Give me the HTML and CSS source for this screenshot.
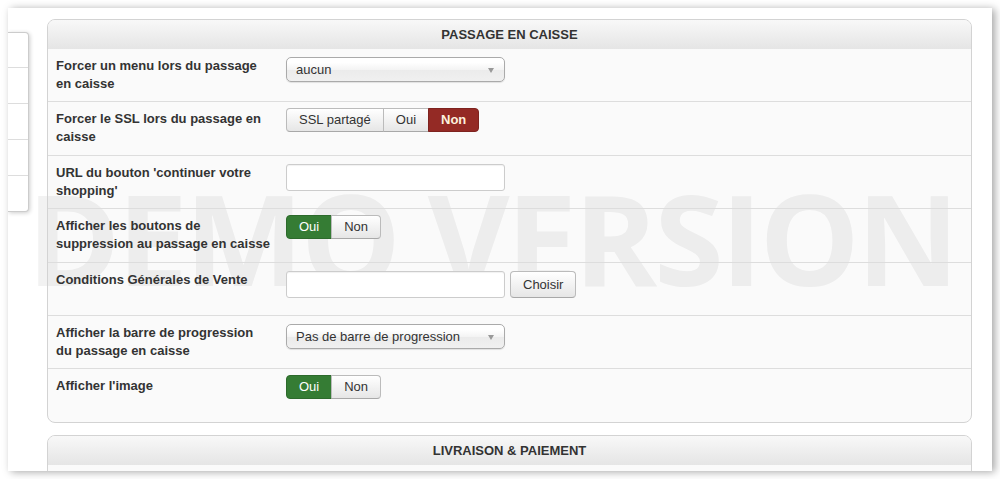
FILE: index.html
```html
<!DOCTYPE html>
<html lang="fr">
<head>
    <meta charset="UTF-8">
    <title>Passage en caisse</title>
    <link rel="stylesheet" href="styles.css">
</head>
<body>

<div class="page">
    <div class="watermark">DEMO VERSION</div>

    <ul class="side-nav">
        <li></li>
        <li></li>
        <li></li>
        <li></li>
        <li></li>
    </ul>

    <div class="main">
        <div class="panel">
            <div class="panel-head">PASSAGE EN CAISSE</div>

            <div class="row">
                <div class="label">Forcer un menu lors du passage en caisse</div>
                <div class="controls">
                    <div class="select">aucun</div>
                </div>
            </div>

            <div class="row">
                <div class="label">Forcer le SSL lors du passage en caisse</div>
                <div class="controls">
                    <div class="btn-group">
                        <span class="btn">SSL partagé</span>
                        <span class="btn">Oui</span>
                        <span class="btn btn-no">Non</span>
                    </div>
                </div>
            </div>

            <div class="row">
                <div class="label">URL du bouton 'continuer votre shopping'</div>
                <div class="controls">
                    <div class="input"></div>
                </div>
            </div>

            <div class="row">
                <div class="label">Afficher les boutons de suppression au passage en caisse</div>
                <div class="controls">
                    <div class="btn-group">
                        <span class="btn btn-yes">Oui</span>
                        <span class="btn">Non</span>
                    </div>
                </div>
            </div>

            <div class="row">
                <div class="label">Conditions Générales de Vente</div>
                <div class="controls">
                    <div class="input"></div>
                    <span class="btn-choose">Choisir</span>
                </div>
            </div>

            <div class="row">
                <div class="label">Afficher la barre de progression du passage en caisse</div>
                <div class="controls">
                    <div class="select">Pas de barre de progression</div>
                </div>
            </div>

            <div class="row">
                <div class="label">Afficher l'image</div>
                <div class="controls">
                    <div class="btn-group">
                        <span class="btn btn-yes">Oui</span>
                        <span class="btn">Non</span>
                    </div>
                </div>
            </div>
        </div>

        <div class="panel">
            <div class="panel-head">LIVRAISON &amp; PAIEMENT</div>

            <div class="row">
                <div class="label"></div>
                <div class="controls">
                    <div class="btn-group">
                        <span class="btn btn-yes">Oui</span>
                        <span class="btn">Non</span>
                    </div>
                </div>
            </div>
        </div>
    </div>
</div>

</body>
</html>
```

FILE: styles.css
```css
body {
    margin: 0;
    background-color: #fff;
    font-family: "Liberation Sans", Arial, sans-serif;
    font-size: 13px;
    color: #333;
}
.page {
    position: relative;
    display: flex;
    align-items: flex-start;
    margin: 8px;
    width: 984px;
    height: 463px;
    overflow: hidden;
    background-color: #fff;
    box-shadow: 3px 1px 8px rgba(0, 0, 0, 0.35);
}
/* big grey text behind the form */
.watermark {
    position: absolute;
    left: 19px;
    top: 166px;
    z-index: 0;
    font-family: "Open Sans", sans-serif;
    font-weight: bold;
    font-size: 126px;
    letter-spacing: -3px;
    line-height: 1;
    color: #f2f2f2;
    white-space: nowrap;
}
.side-nav {
    list-style: none;
    margin: 24px 0 0;
    padding: 0;
    width: 20px;
    border: 1px solid #ccc;
    border-left: none;
    border-radius: 0 4px 4px 0;
    background-color: #fff;
    box-shadow: 1px 1px 4px rgba(0, 0, 0, 0.2);
    position: relative;
    z-index: 1;
}
.side-nav li {
    height: 35px;
    border-bottom: 1px solid #ddd;
}
.side-nav li:first-child {
    height: 34px;
}
.side-nav li:last-child {
    border-bottom: none;
}
.main {
    position: relative;
    z-index: 1;
    margin: 11px 0 0 18px;
    width: 925px;
}
.panel {
    border: 1px solid #d3d3d3;
    border-radius: 8px;
    background-color: rgba(0, 0, 0, 0.02);
    margin-bottom: 12.5px;
    overflow: hidden;
}
.panel-head {
    height: 29px;
    line-height: 29px;
    text-align: center;
    font-weight: bold;
    color: #333;
    background: linear-gradient(#f8f8f8, #e5e5e5);
}
.row {
    display: flex;
    padding: 8px;
    min-height: 36.4px;
    border-bottom: 1px solid #ddd;
}
.row:last-child {
    border-bottom: none;
}
.label {
    width: 214px;
    margin-right: 16px;
    font-weight: bold;
    line-height: 18px;
}
.controls {
    display: flex;
    align-items: flex-start;
}
.select {
    position: relative;
    box-sizing: border-box;
    width: 219px;
    height: 25px;
    padding-left: 9px;
    line-height: 23px;
    border: 1px solid #aaa;
    border-radius: 5px;
    background: linear-gradient(#fff 20%, #f4f4f4 50%, #ebebeb 52%, #f0f0f0);
    box-shadow: 0 1px 1px rgba(0, 0, 0, 0.1);
}
.select::after {
    content: "";
    position: absolute;
    right: 10px;
    top: 10px;
    border-top: 5px solid #999;
    border-left: 3px solid transparent;
    border-right: 3px solid transparent;
}
.input {
    box-sizing: border-box;
    width: 219px;
    height: 27px;
    border: 1px solid #ccc;
    border-radius: 3px;
    background-color: #fff;
    box-shadow: inset 0 1px 1px rgba(0, 0, 0, 0.06);
}
.btn-group {
    display: flex;
    margin-top: -2px;
}
.btn {
    padding: 2px 12px;
    line-height: 18px;
    border: 1px solid #bbb;
    border-bottom-color: #a8a8a8;
    background: linear-gradient(#fff, #e6e6e6);
    color: #333;
    margin-left: -1px;
}
.btn:first-child {
    margin-left: 0;
    border-radius: 4px 0 0 4px;
}
.btn:last-child {
    border-radius: 0 4px 4px 0;
}
.btn-yes {
    background: #357c34;
    border-color: #2d6a2c;
    color: #fff;
}
.btn-no {
    background: #942a25;
    border-color: #7e231f;
    color: #fcf1de;
    font-weight: bold;
}
.btn-choose {
    box-sizing: border-box;
    height: 27px;
    margin-left: 5px;
    padding: 0 12px;
    line-height: 25px;
    border: 1px solid #bbb;
    border-bottom-color: #a8a8a8;
    border-radius: 4px;
    background: linear-gradient(#fff, #e6e6e6);
}
```
